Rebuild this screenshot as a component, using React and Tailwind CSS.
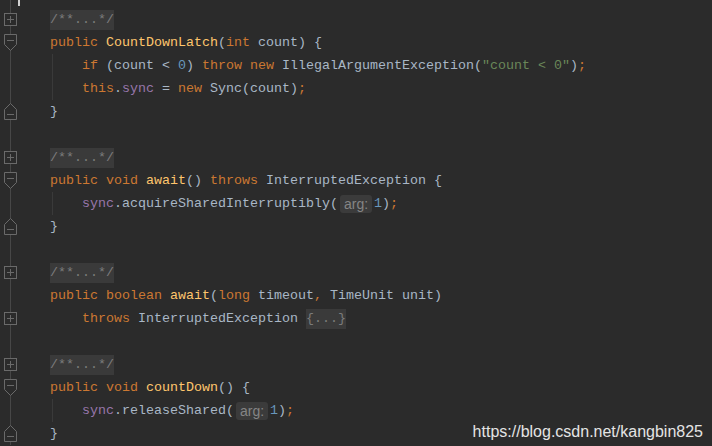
import React from "react";

const K = "text-[#cc7832]";
const M = "text-[#ffc66d]";
const T = "text-[#a9b7c6]";
const F = "text-[#9876aa]";
const S = "text-[#6a8759]";
const N = "text-[#6897bb]";

const fold = [["/**...*/", "fold"]];

const rows = [
  { g: "plus", code: fold },
  { g: "open", code: [["public ", K], ["CountDownLatch", M], ["(", T], ["int", K], [" count) {", T]] },
  {
    guide: true,
    code: [["if", K], [" (count < ", T], ["0", N], [") ", T], ["throw new ", K], ["IllegalArgumentException(", T], ['"count < 0"', S], [")", T], [";", K]],
  },
  { guide: true, code: [["this", K], [".", T], ["sync", F], [" = ", T], ["new ", K], ["Sync(count)", T], [";", K]] },
  { g: "close", code: [["}", T]] },
  { code: [] },
  { g: "plus", code: fold },
  { g: "open", code: [["public void ", K], ["await", M], ["() ", T], ["throws ", K], ["InterruptedException {", T]] },
  { guide: true, code: [["sync", F], [".acquireSharedInterruptibly(", T], ["arg:", "hint"], ["1", N], [")", T], [";", K]] },
  { g: "close", code: [["}", T]] },
  { code: [] },
  { g: "plus", code: fold },
  { code: [["public boolean ", K], ["await", M], ["(", T], ["long", K], [" timeout", T], [", ", K], ["TimeUnit unit)", T]] },
  { g: "plus", indent: true, code: [["throws ", K], ["InterruptedException ", T], ["{...}", "fold"]] },
  { code: [] },
  { g: "plus", code: fold },
  { g: "open", code: [["public void ", K], ["countDown", M], ["() {", T]] },
  { guide: true, code: [["sync", F], [".releaseShared(", T], ["arg:", "hint"], ["1", N], [")", T], [";", K]] },
  { g: "close", code: [["}", T]] },
];

function Marker({ type }) {
  const c = "#6a6a6a";
  return (
    <svg width="20" height="23" className="block shrink-0">
      <line x1="10.5" y1="0" x2="10.5" y2="23" stroke="#474747" />
      {type === "plus" && (
        <>
          <rect x="4.5" y="5.5" width="12" height="12" fill="#2b2b2b" stroke={c} />
          <path d="M7 11.5h7M10.5 8v7" stroke={c} />
        </>
      )}
      {type === "open" && (
        <>
          <path d="M4.5 3.5h12v10l-6 6-6-6z" fill="#2b2b2b" stroke={c} />
          <path d="M7 9.5h7" stroke={c} />
        </>
      )}
      {type === "close" && (
        <>
          <path d="M10.5 3.5l6 6v10h-12v-10z" fill="#2b2b2b" stroke={c} />
          <path d="M7 14.5h7" stroke={c} />
        </>
      )}
    </svg>
  );
}

function Token({ text, kind }) {
  if (kind === "fold") {
    return <span className="inline-block leading-[20px] bg-[#3a3a3a] text-[#7c7c7c]">{text}</span>;
  }
  if (kind === "hint") {
    return (
      <span className="inline-block mx-[2px] px-[4px] leading-[18px] rounded-[3px] bg-[#3b3b3b] text-[#858585] text-[14px] font-['Liberation_Sans',Arial,sans-serif]">
        {text}
      </span>
    );
  }
  return <span className={kind}>{text}</span>;
}

export default function App() {
  return (
    <div className="relative w-[712px] h-[446px] overflow-hidden bg-[#2b2b2b] font-['Liberation_Mono',monospace] text-[13.33px]">
      <div className="flex h-[8px]">
        <svg width="20" height="8" className="block">
          <line x1="10.5" y1="0" x2="10.5" y2="8" stroke="#474747" />
          <rect x="18" y="0" width="2" height="6" fill="#d0d0d0" />
        </svg>
      </div>
      {rows.map((r, i) => (
        <div key={i} className="flex h-[23px]">
          <Marker type={r.g} />
          <div className={r.guide ? "flex items-center whitespace-pre pl-[32px]" : "flex items-center whitespace-pre pl-[30px]"}>
            {r.guide && <span className="self-stretch shrink-0 w-[30px] border-l border-[#3a3a3a]" />}
            {r.indent && <span className="shrink-0 w-[32px]" />}
            {r.code.map(([text, kind], j) => (
              <Token key={j} text={text} kind={kind} />
            ))}
          </div>
        </div>
      ))}
      <div className="absolute right-[9px] top-[420px] text-[16px] text-[#e4e4e4] font-['Liberation_Sans',Arial,sans-serif]">
        https://blog.csdn.net/kangbin825
      </div>
    </div>
  );
}
